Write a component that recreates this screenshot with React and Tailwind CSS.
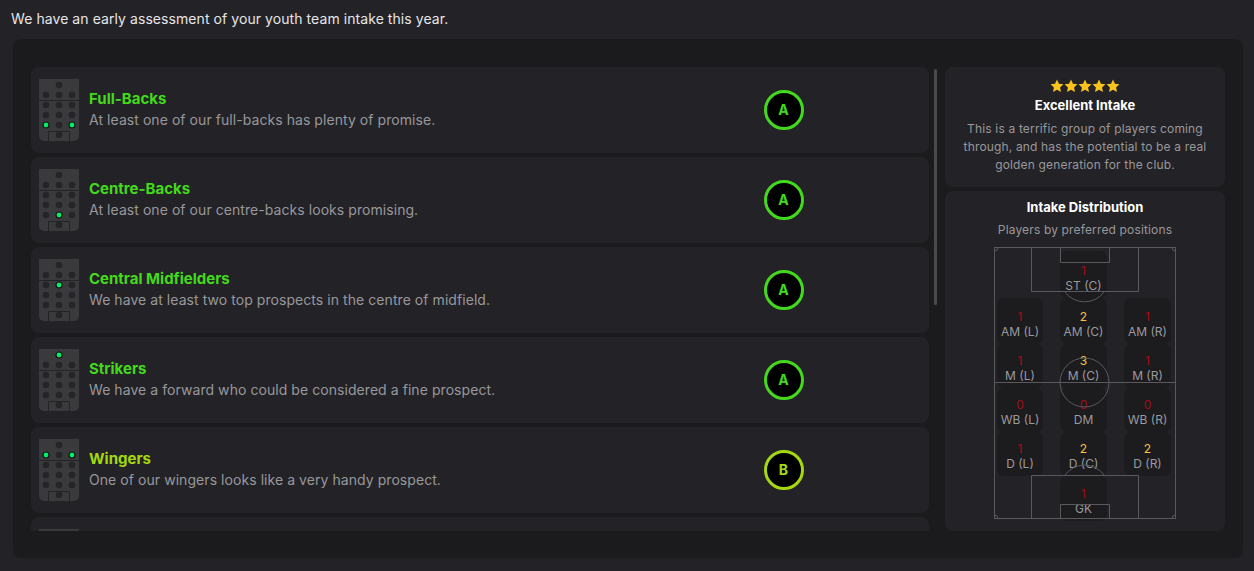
const FONT = "font-['Inter','Liberation_Sans',sans-serif]";

const ROWS = [
  { title: "Full-Backs", desc: "At least one of our full-backs has plenty of promise.", grade: "A", on: ["46,125", "72,125"] },
  { title: "Centre-Backs", desc: "At least one of our centre-backs looks promising.", grade: "A", on: ["59,125"] },
  { title: "Central Midfielders", desc: "We have at least two top prospects in the centre of midfield.", grade: "A", on: ["59,105"] },
  { title: "Strikers", desc: "We have a forward who could be considered a fine prospect.", grade: "A", on: ["59,85"] },
  { title: "Wingers", desc: "One of our wingers looks like a very handy prospect.", grade: "B", on: ["46,95", "72,95"] },
];

const DOTS = [
  [20, 6],
  [7, 16], [20, 16], [33, 16],
  [7, 26], [20, 26], [33, 26],
  [7, 36], [20, 36], [33, 36],
  [7, 46], [20, 46], [33, 46],
  [20, 56],
];

function MiniPitch({ on = [] }) {
  const active = on.map((s) => {
    const [x, y] = s.split(",").map(Number);
    return `${x - 39},${y - 79}`;
  });
  return (
    <svg width="40" height="62" viewBox="0 0 40 62" className="shrink-0 block">
      <path d="M0 0H40V57A5 5 0 0 1 35 62H5A5 5 0 0 1 0 57Z" fill="#3a393c" />
      <path d="M0 21.5H40" stroke="#232226" strokeWidth="1" />
      <path d="M9.5 62V52.5H30.5V62" stroke="#232226" strokeWidth="1" fill="none" />
      {DOTS.map(([x, y]) => {
        const lit = active.includes(`${x},${y}`);
        return lit ? (
          <circle key={`${x}-${y}`} cx={x} cy={y} r="3" fill="#00ee66" stroke="#141414" strokeWidth="1.2" />
        ) : (
          <circle key={`${x}-${y}`} cx={x} cy={y} r="3.3" fill="#252427" />
        );
      })}
    </svg>
  );
}

function Row({ title, desc, grade, on }) {
  const isA = grade === "A";
  return (
    <div className="flex items-center h-[86px] shrink-0 rounded-[8px] bg-[#232226] pl-[8px]">
      <MiniPitch on={on} />
      <div className="ml-[10px] w-[675px] shrink-0 -mt-[2px]">
        <div className={`text-[15px] leading-[20px] font-bold ${isA ? "text-[#43d91c]" : "text-[#a4d80f]"}`}>{title}</div>
        <div className="text-[14px] leading-[20px] mt-[1px] tracking-[0.06px] text-[#98989c]">{desc}</div>
      </div>
      <div
        className={`w-[40px] h-[40px] rounded-full bg-black border-[3px] flex items-center justify-center pb-[1px] pr-[1px] text-[14px] font-bold ${
          isA ? "border-[#43d91c] text-[#43d91c]" : "border-[#a4d80f] text-[#a4d80f]"
        }`}
      >
        {grade}
      </div>
    </div>
  );
}

function Star() {
  return (
    <svg width="14" height="14" viewBox="0 0 24 24" className="block">
      <path d="M12 1l3.3 7.2 7.7.9-5.7 5.3 1.5 7.8L12 18.3 5.2 22.2l1.5-7.8L1 9.1l7.7-.9z" fill="#f9c31e" />
    </svg>
  );
}

const RED = "text-[#a40f14]";
const YEL = "text-[#f5c542]";
const CELLS = [
  [null, { n: 1, l: "ST (C)", c: RED }, null],
  [{ n: 1, l: "AM (L)", c: RED }, { n: 2, l: "AM (C)", c: YEL }, { n: 1, l: "AM (R)", c: RED }],
  [{ n: 1, l: "M (L)", c: RED }, { n: 3, l: "M (C)", c: YEL }, { n: 1, l: "M (R)", c: RED }],
  [{ n: 0, l: "WB (L)", c: RED }, { n: 0, l: "DM", c: RED }, { n: 0, l: "WB (R)", c: RED }],
  [{ n: 1, l: "D (L)", c: RED }, { n: 2, l: "D (C)", c: YEL }, { n: 2, l: "D (R)", c: YEL }],
  [null, { n: 1, l: "GK", c: RED }, null],
];

function PitchLines() {
  const s = "#5a595d";
  return (
    <svg width="182" height="272" viewBox="0 0 182 272" className="absolute left-0 top-0 pointer-events-none" fill="none" stroke={s} strokeWidth="1">
      <rect x="0.5" y="0.5" width="181" height="271" />
      <path d="M0.5 135.5H181.5" />
      <circle cx="90.5" cy="135.5" r="24.5" />
      <path d="M37.5 0.5V44.5H144.5V0.5" />
      <path d="M66.5 0.5V15.5H115.5V0.5" />
      <path d="M37.5 271.5V228.5H144.5V271.5" />
      <path d="M66.5 271.5V257.5H115.5V271.5" />
      <path d="M70.5 44.5A24.5 24.5 0 0 0 110.5 44.5" />
      <path d="M70.5 228.5A24.5 24.5 0 0 1 110.5 228.5" />
      <path d="M0.5 4A3.5 3.5 0 0 0 4 0.5M178 0.5A3.5 3.5 0 0 0 181.5 4M0.5 268A3.5 3.5 0 0 1 4 271.5M178 271.5A3.5 3.5 0 0 1 181.5 268" />
    </svg>
  );
}

function Pitch() {
  return (
    <div className="relative w-[182px] h-[272px] mx-auto mt-[8px]">
      <div className="grid grid-cols-[46px_47px_47px] gap-x-[17px] pl-[3px] pt-[4px] grid-rows-[47px_45.5px_44.5px_44px_44px_45px] text-center">
        {CELLS.flat().map((c, i) =>
          c ? (
            <div key={i} className="rounded-[7px] bg-[#1c1b1e] flex flex-col items-center justify-end pb-[5px] text-[12px] leading-[15px] text-[#9a9a9e]">
              <div className={c.c}>{c.n}</div>
              <div>{c.l}</div>
            </div>
          ) : (
            <div key={i} />
          )
        )}
      </div>
      <PitchLines />
    </div>
  );
}

export default function App() {
  return (
    <div className={`w-[1254px] h-[571px] overflow-hidden bg-[#232226] flex flex-col ${FONT}`}>
      <div className="h-[39px] shrink-0 pl-[11px] pt-[9px] text-[14px] leading-[20px] tracking-[0.07px] text-[#e6e6e8]">
        We have an early assessment of your youth team intake this year.
      </div>
      <div className="ml-[13px] mr-[11px] h-[519px] rounded-[8px] bg-[#1b1a1d] pt-[28px] pl-[18px] flex">
        <div className="w-[898px] h-[464px] overflow-hidden flex flex-col gap-[4px] shrink-0">
          {ROWS.map((r) => (
            <Row key={r.title} {...r} />
          ))}
          <div className="flex items-center h-[86px] shrink-0 rounded-[8px] bg-[#232226] pl-[8px]">
            <MiniPitch />
          </div>
        </div>
        <div className="w-[16px] shrink-0 pl-[5px] pt-[2px]">
          <div className="w-[3px] h-[236px] rounded-full bg-[#4a494d]" />
        </div>
        <div className="w-[280px] h-[464px] flex flex-col gap-[4px] shrink-0">
          <div className="h-[120px] rounded-[8px] bg-[#232226] flex flex-col items-center pt-[12px] text-center">
            <div className="flex h-[14px]">
              {[0, 1, 2, 3, 4].map((i) => (
                <Star key={i} />
              ))}
            </div>
            <div className="text-[13px] leading-[18px] font-bold text-white mt-[3px]">Excellent Intake</div>
            <div className="text-[12px] leading-[18px] tracking-[0.16px] text-[#98989c] mt-[6px] w-[256px]">
              This is a terrific group of players coming through, and has the potential to be a real golden generation for the club.
            </div>
          </div>
          <div className="h-[340px] rounded-[8px] bg-[#232226] pt-[7px] text-center">
            <div className="text-[13px] leading-[18px] font-bold text-white">Intake Distribution</div>
            <div className="text-[12px] leading-[18px] tracking-[0.15px] text-[#98989c] mt-[5px]">Players by preferred positions</div>
            <Pitch />
          </div>
        </div>
      </div>
    </div>
  );
}
